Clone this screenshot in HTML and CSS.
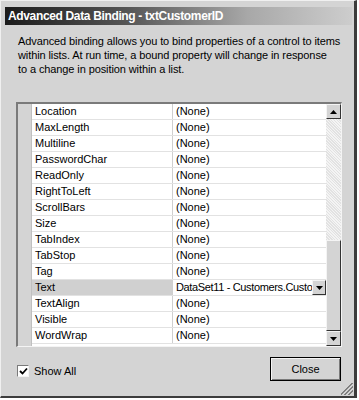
FILE: index.html
```html
<!DOCTYPE html>
<html lang="en">
<head>
    <meta charset="UTF-8">
    <title>Advanced Data Binding - txtCustomerID</title>
    <link rel="stylesheet" href="styles.css">
</head>
<body>
    <div class="window">
        <div class="titlebar">Advanced Data Binding - txtCustomerID</div>
        <p class="desc">Advanced binding allows you to bind properties of a control to items<br>within lists. At run time, a bound property will change in response<br>to a change in position within a list.</p>

        <div class="grid">
            <div class="gutter"></div>
            <div class="rows">
                <div class="row"><span class="name">Location</span><span class="value">(None)</span></div>
                <div class="row"><span class="name">MaxLength</span><span class="value">(None)</span></div>
                <div class="row"><span class="name">Multiline</span><span class="value">(None)</span></div>
                <div class="row"><span class="name">PasswordChar</span><span class="value">(None)</span></div>
                <div class="row"><span class="name">ReadOnly</span><span class="value">(None)</span></div>
                <div class="row"><span class="name">RightToLeft</span><span class="value">(None)</span></div>
                <div class="row"><span class="name">ScrollBars</span><span class="value">(None)</span></div>
                <div class="row"><span class="name">Size</span><span class="value">(None)</span></div>
                <div class="row"><span class="name">TabIndex</span><span class="value">(None)</span></div>
                <div class="row"><span class="name">TabStop</span><span class="value">(None)</span></div>
                <div class="row"><span class="name">Tag</span><span class="value">(None)</span></div>
                <div class="row selected"><span class="name">Text</span><span class="value">DataSet11 - Customers.Custo<span class="drop"><svg width="7" height="4" viewBox="0 0 7 4"><path d="M0 0h7L3.5 4z" fill="#000"/></svg></span></span></div>
                <div class="row"><span class="name">TextAlign</span><span class="value">(None)</span></div>
                <div class="row"><span class="name">Visible</span><span class="value">(None)</span></div>
                <div class="row"><span class="name">WordWrap</span><span class="value">(None)</span></div>
            </div>
            <div class="scrollbar">
                <div class="sb-btn"><svg width="7" height="4" viewBox="0 0 7 4"><path d="M3.5 0L7 4H0z" fill="#000"/></svg></div>
                <div class="sb-track"></div>
                <div class="sb-thumb"></div>
                <div class="sb-btn"><svg width="7" height="4" viewBox="0 0 7 4"><path d="M0 0h7L3.5 4z" fill="#000"/></svg></div>
            </div>
        </div>

        <div class="footer">
            <label class="check"><span class="box"><svg width="9" height="9" viewBox="0 0 9 9"><path d="M1 4l2.5 2.5L8 1.5" stroke="#000" stroke-width="1.8" fill="none"/></svg></span>Show All</label>
            <button class="btn" type="button">Close</button>
        </div>
        <div class="grip"></div>
    </div>
</body>
</html>
```

FILE: styles.css
```css
body {
    margin: 0;
    padding: 0;
    background-color: #fff;
    font-family: "Liberation Sans", Arial, sans-serif;
    font-size: 11px;
    color: #000;
}
.window {
    position: relative;
    box-sizing: border-box;
    width: 357px;
    height: 398px;
    padding: 4px 2px 2px 4px;
    background-color: #d4d4d4;
    border-left: 1px solid #f0f0f0;
    border-top: 1px solid #f0f0f0;
    border-right: 3px solid #3c3c3c;
    border-bottom: 2px solid #3c3c3c;
    display: flex;
    flex-direction: column;
}
.titlebar {
    height: 18px;
    margin-top: 2px;
    padding-left: 3px;
    line-height: 18px;
    font-weight: bold;
    font-size: 12px;
    letter-spacing: -0.35px;
    color: #fff;
    background: linear-gradient(to right, #1c1c1c 0%, #555 35%, #a8a8a8 70%, #cdcdcd 100%);
}
.desc {
    margin: 9px 10px 0 13px;
    line-height: 14px;
    height: 68px;
    font-size: 11px;
    letter-spacing: -0.1px;
    white-space: nowrap;
}
.grid {
    box-sizing: border-box;
    display: flex;
    margin-left: 11px;
    width: 326px;
    height: 245px;
    border-top: 2px solid #7a7a7a;
    border-left: 2px solid #7a7a7a;
    border-right: 1px solid #f4f4f4;
    border-bottom: 1px solid #f4f4f4;
    background-color: #fff;
}
.gutter {
    width: 13px;
    background-color: #d4d4d4;
    border-right: 1px solid #c0c0c0;
}
.rows {
    flex: 1;
    min-width: 0;
}
.row {
    display: flex;
    height: 16px;
    box-sizing: border-box;
    border-bottom: 1px solid #e2e2e2;
    line-height: 15px;
}
.name {
    width: 137px;
    padding-left: 3px;
    border-right: 1px solid #cfcfcf;
}
.value {
    flex: 1;
    padding-left: 3px;
    white-space: nowrap;
    overflow: hidden;
    position: relative;
}
.row.selected .name {
    background-color: #d0d0d0;
}
.row.selected .value {
    letter-spacing: -0.35px;
}
.drop {
    position: absolute;
    right: 0;
    top: 0;
    width: 14px;
    height: 15px;
    background-color: #d4d4d4;
    border-top: 1px solid #f4f4f4;
    border-left: 1px solid #f4f4f4;
    border-right: 1px solid #333;
    border-bottom: 1px solid #333;
    box-sizing: border-box;
    display: flex;
    align-items: center;
    justify-content: center;
}
.scrollbar {
    width: 15px;
    display: flex;
    flex-direction: column;
    background-color: #ececec;
}
.sb-btn {
    box-sizing: border-box;
    height: 15px;
    background-color: #d4d4d4;
    border-top: 1px solid #f4f4f4;
    border-left: 1px solid #f4f4f4;
    border-right: 1px solid #333;
    border-bottom: 1px solid #333;
    display: flex;
    align-items: center;
    justify-content: center;
}
.sb-track {
    height: 121px;
    background-color: #ececec;
    background-image: repeating-linear-gradient(45deg, #e2e2e2 0 1px, #f4f4f4 1px 2px);
}
.sb-thumb {
    flex: 1;
    box-sizing: border-box;
    background-color: #d4d4d4;
    border-top: 1px solid #f4f4f4;
    border-left: 1px solid #f4f4f4;
    border-right: 1px solid #333;
    border-bottom: 1px solid #333;
}
.footer {
    display: flex;
    justify-content: space-between;
    align-items: center;
    margin: 10px 11px 0 12px;
}
.check {
    display: flex;
    align-items: center;
    gap: 5px;
    margin-top: 4px;
}
.box {
    box-sizing: border-box;
    width: 12px;
    height: 12px;
    background-color: #fff;
    border-top: 1px solid #7a7a7a;
    border-left: 1px solid #7a7a7a;
    border-right: 1px solid #f4f4f4;
    border-bottom: 1px solid #f4f4f4;
    display: flex;
    align-items: center;
    justify-content: center;
}
.btn {
    box-sizing: border-box;
    width: 71px;
    height: 24px;
    padding: 0;
    font-family: "Liberation Sans", Arial, sans-serif;
    font-size: 11px;
    background-color: #d4d4d4;
    border: 1px solid #000;
    box-shadow: inset 1px 1px 0 #f4f4f4, inset -1px -1px 0 #7a7a7a;
}
.grip {
    position: absolute;
    right: 1px;
    bottom: 1px;
    width: 12px;
    height: 12px;
    background: linear-gradient(135deg, transparent 0 45%, #808080 45% 52%, transparent 52% 62%, #808080 62% 69%, transparent 69% 79%, #808080 79% 86%, transparent 86%);
}
```
